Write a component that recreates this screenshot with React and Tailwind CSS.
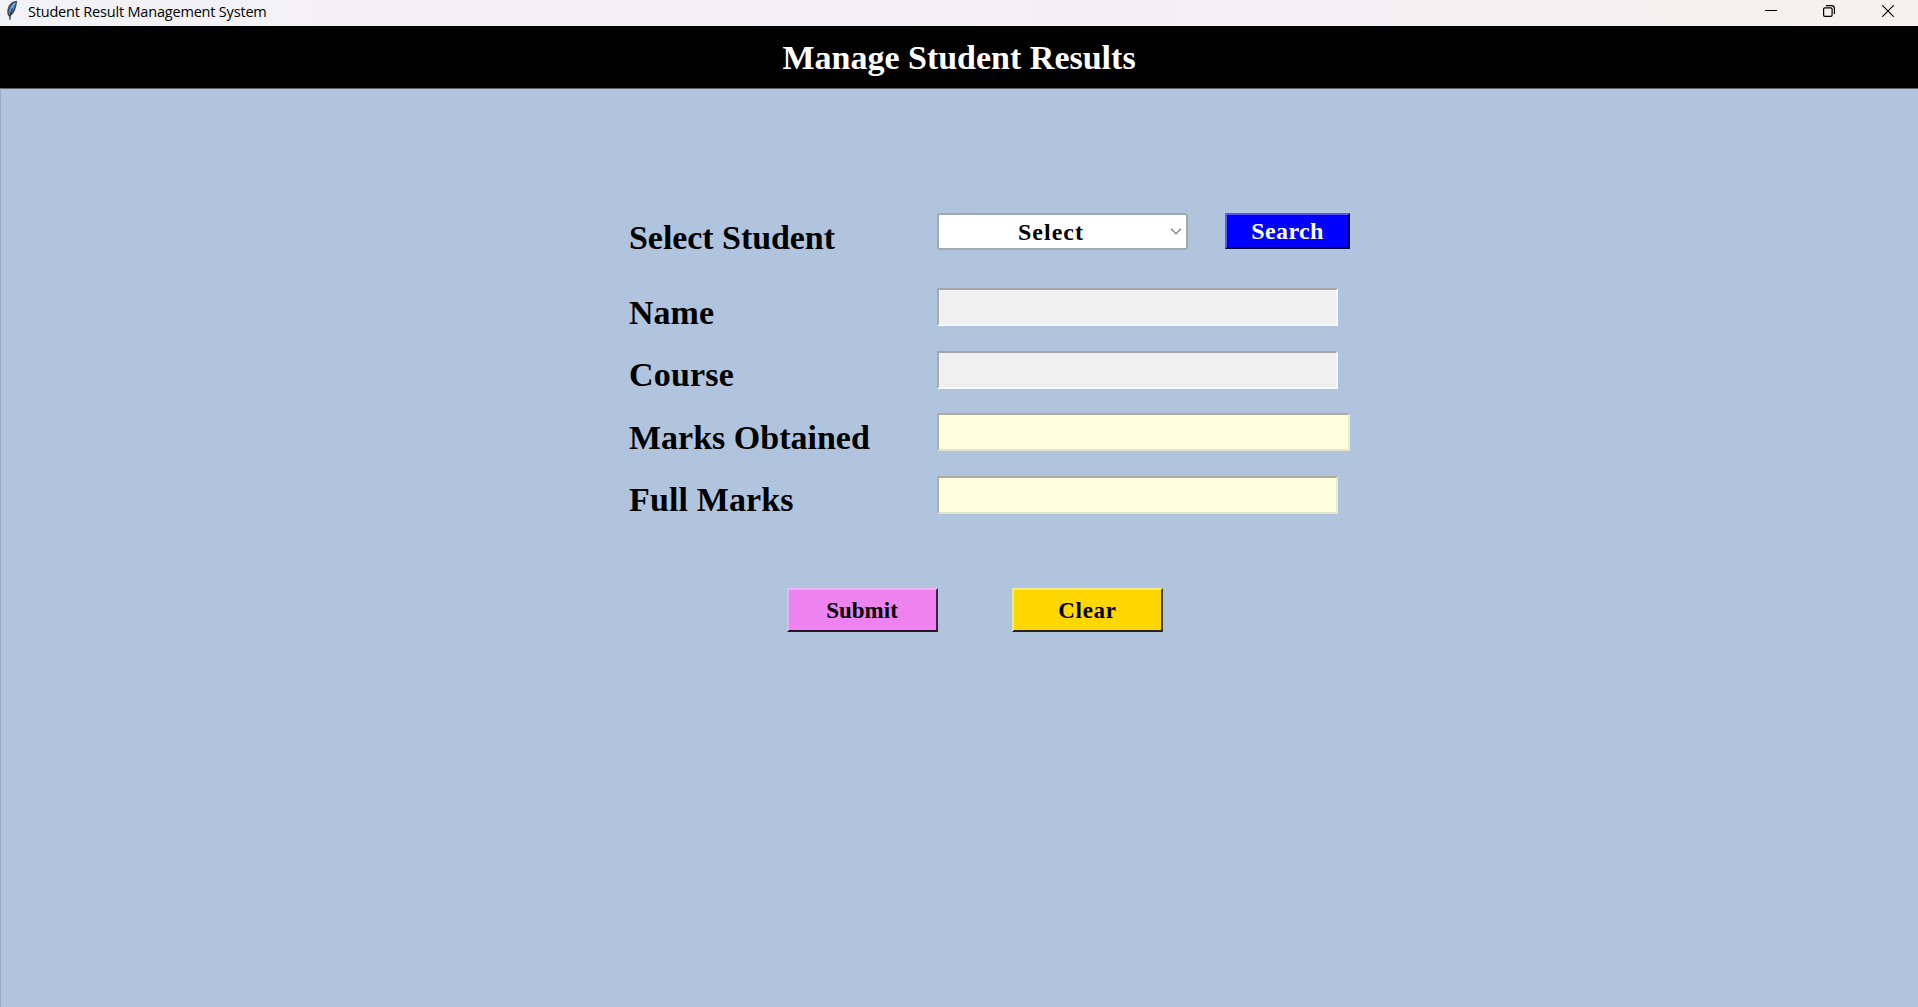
const entryBase = "h-[38px] border-2 outline-none rounded-none";
const grayEntry = "w-[401px] bg-[#f0f0f0] border-t-[#a4a6a9] border-l-[#aaabad] border-r-[#f4f7fb] border-b-[#f6f8fb]";
const creamWide = "w-[413px] bg-[#ffffe0] border-t-[#adac9f] border-l-[#b0b0a1] border-r-[#eaecd0] border-b-[#e2e5cd]";
const creamEntry = "w-[401px] bg-[#ffffe0] border-t-[#adac9f] border-l-[#b0b0a1] border-r-[#eaecd0] border-b-[#e2e5cd]";

const fields = [
  { label: "Name", entry: grayEntry, row: "mt-[38px]", text: "pt-[6px]" },
  { label: "Course", entry: grayEntry, row: "mt-[25px]", text: "pt-[5px] tracking-[0.2px]" },
  { label: "Marks Obtained", entry: creamWide, row: "mt-6", text: "pt-[6px]" },
  { label: "Full Marks", entry: creamEntry, row: "mt-[25px]", text: "pt-[5px] tracking-[0.12px]" },
];

function Feather() {
  return (
    <svg className="ml-[6px] h-5 w-3 shrink-0" viewBox="0 0 12 20">
      <path d="M10.8 .8C8 1 4.500 2.500 2.600 6C1.300 8.800 1 12 1.600 14.500L3.200 17L5 15.600C7.500 14 9.500 10 10.300 6C10.800 3.800 11.200 2 10.800 .8Z" fill="#44474d" />
      <path d="M9.600 2.200C7 3 4.700 5 3.500 8C2.600 10.500 2.600 13 3.300 14.700C6 13.500 8 10 8.800 6.500C9.200 4.800 9.800 3.500 9.600 2.200Z" fill="#3f83cc" />
      <path d="M9.200 3C6.500 6 4.600 10 3.900 14" fill="none" stroke="#9fc4ea" strokeWidth="1" />
      <path d="M6.300 8.500C4.800 11.500 3.800 15 3.800 19.700" fill="none" stroke="#2b2b2d" strokeWidth="1.200" />
    </svg>
  );
}

function WindowControls() {
  return (
    <div className="mr-6 ml-auto flex h-[22px] items-center gap-[46px] text-black">
      <svg className="size-3" viewBox="0 0 12 12" fill="none" stroke="currentColor">
        <path d="M0 5.500H12" />
      </svg>
      <svg className="size-3" viewBox="0 0 12 12" fill="none" stroke="currentColor" strokeWidth="1.200">
        <rect x=".6" y="2.900" width="8.500" height="8.500" rx="1.300" />
        <path d="M3 .6H8.600Q11.400 .6 11.400 3.400V9" />
      </svg>
      <svg className="ml-px size-3" viewBox="0 0 12 12" fill="none" stroke="currentColor" strokeWidth="1.100">
        <path d="M.2 .2L11.800 11.800M11.800 .2L.2 11.800" />
      </svg>
    </div>
  );
}

function Label({ children, className }) {
  return (
    <span className={"h-[37px] w-[308px] shrink-0 whitespace-pre text-[34px] leading-[38px] font-bold " + className}>
      {children}
    </span>
  );
}

export default function App() {
  return (
    <div className="flex h-[1007px] w-[1918px] flex-col overflow-hidden bg-[#b0c4de] font-['Liberation_Serif',serif] text-black">
      <div className="flex h-[26px] shrink-0 items-start bg-linear-to-r from-[#f2f3f6] via-[#f5eff6] to-[#f6f1ef]">
        <Feather />
        <span className="ml-[10px] text-[14.5px] leading-6 tracking-[-0.19px] whitespace-nowrap font-['Open_Sans',sans-serif]">
          Student Result Management System
        </span>
        <WindowControls />
      </div>
      <h1 className="flex h-[62px] shrink-0 items-center justify-center bg-black pt-0.5 text-[34px] leading-[38px] font-bold text-white">
        Manage Student Results
      </h1>
      <main className="flex-1 border-t border-l border-t-[#586270] border-l-[#9aacc3] pt-[124px] pl-[628px]">
        <div className="flex">
          <Label className="pt-[6px] tracking-[-0.06px]">Select Student</Label>
          <button className="flex h-[37px] w-[251px] items-center rounded-[3px] border-2 border-[#a3a9b1] bg-white pr-[13px]">
            <span className="flex-1 pr-[7px] text-center text-[24px] leading-7 font-bold tracking-[1px]">Select</span>
            <svg className="mr-[-9px] h-[7px] w-3" viewBox="0 0 12 7" fill="none" stroke="#858585" strokeWidth="1.300">
              <path d="M1 .8L6 5.800L11 .8" />
            </svg>
          </button>
          <button className="ml-[37px] h-[36px] w-[125px] border-2 border-t-[#5757f6] border-l-[#5a5af4] border-r-[#04043c] border-b-[#04043c] bg-[#0000ff] text-[24px] leading-7 font-bold tracking-[0.4px] text-white">
            Search
          </button>
        </div>
        {fields.map((f) => (
          <label key={f.label} className={"flex h-[38px] " + f.row}>
            <Label className={f.text}>{f.label}</Label>
            <input type="text" className={entryBase + " " + f.entry} />
          </label>
        ))}
        <div className="mt-[74px] ml-[158px] flex gap-[74px] text-[23px] leading-7 font-bold">
          <button className="h-[44px] w-[151px] border-2 border-t-[#eab4f1] border-l-[#eab4f1] border-r-[#3c2340] border-b-[#241526] bg-[#ee82ee] pt-0.5 pr-px">
            Submit
          </button>
          <button className="h-[44px] w-[151px] border-2 border-t-[#eeea85] border-l-[#eeea85] border-r-[#40391a] border-b-[#262210] bg-[#ffd700] pt-0.5 tracking-[0.7px]">
            Clear
          </button>
        </div>
      </main>
    </div>
  );
}
